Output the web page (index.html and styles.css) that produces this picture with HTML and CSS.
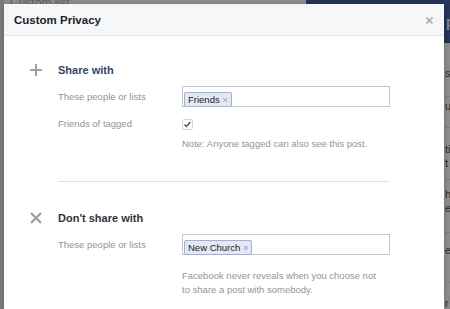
FILE: index.html
```html
<!doctype html>
<html>
<head>
<meta charset="utf-8">
<link rel="stylesheet" href="styles.css">
<title>Custom Privacy</title>
</head>
<body>

    <div class="page">
        <div class="topbar">
            <span class="crumb">Custom list</span>
            <div class="bluebar"><span>p</span></div>
        </div>
        <div class="feed">
            <div class="feed-row r1">s</div>
            <div class="feed-row r2">u</div>
            <div class="feed-row r3">ti<br>t</div>
            <div class="feed-row r4">h<br>e</div>
            <div class="feed-row r5">e</div>
            <div class="feed-row r6">r</div>
        </div>
    </div>

    <div class="dialog">
        <header class="dialog-head">
            <h1>Custom Privacy</h1>
            <svg class="close" width="7" height="7" viewBox="0 0 7 7"><path d="M0.5 0.5L6.5 6.5M6.5 0.5L0.5 6.5" stroke="#a8abaf" stroke-width="1.6"/></svg>
        </header>

        <div class="dialog-body">

            <div class="section">
                <div class="section-head">
                    <span class="icon"><svg width="12" height="12" viewBox="0 0 12 12"><path d="M6 0V12M0 6H12" stroke="#9ba1ab" stroke-width="2"/></svg></span>
                    <h2 class="share">Share with</h2>
                </div>
                <div class="row first">
                    <label>These people or lists</label>
                    <div class="tokens">
                        <span class="token">Friends <b>&times;</b></span>
                    </div>
                </div>
                <div class="row check-row">
                    <label>Friends of tagged</label>
                    <span class="check"><svg width="11" height="11" viewBox="0 0 11 11"><rect x="0.5" y="0.5" width="10" height="10" rx="2" fill="#fff" stroke="#ccd0d5"/><path d="M2.6 5.6L4.4 7.4L8.4 3" fill="none" stroke="#4b4f56" stroke-width="1.4"/></svg></span>
                </div>
                <p class="hint note">Note: Anyone tagged can also see this post.</p>
            </div>

            <div class="divider"></div>

            <div class="section second">
                <div class="section-head">
                    <span class="icon"><svg width="12" height="12" viewBox="0 0 12 12"><path d="M1 1L11 11M11 1L1 11" stroke="#9ba1ab" stroke-width="2.4"/></svg></span>
                    <h2>Don't share with</h2>
                </div>
                <div class="row first">
                    <label>These people or lists</label>
                    <div class="tokens">
                        <span class="token">New Church <b>&times;</b></span>
                    </div>
                </div>
                <p class="hint never">Facebook never reveals when you choose not<br>to share a post with somebody.</p>
            </div>

        </div>
    </div>

</body>
</html>
```

FILE: styles.css
```css
html, body
{
    margin:0;
    height:100%;
}
body
{
    position:relative;
    overflow:hidden;
    background:linear-gradient(to right, #7b7b7b 0, #7b7b7b 4px, #8c8c8c 4px);
    font-family:"Liberation Sans", Arial, sans-serif;
    color:#1d2129;
}

/* dimmed page behind the dialog */
.page
{
    height:309px;
    overflow:hidden;
}
.topbar
{
    display:flex;
    justify-content:space-between;
    height:43px;
}
.crumb
{
    padding-left:10px;
    margin-top:-4px;
    font-size:12px;
    line-height:14px;
    color:#5f5f5f;
}
.bluebar
{
    box-sizing:border-box;
    width:144px;
    background:#26335a;
    border-bottom:1px solid #1e2a4a;
}
.bluebar span
{
    display:block;
    padding:14px 0 0 140px;
    font-size:14px;
    line-height:16px;
    font-weight:bold;
    color:#7d879c;
}
.feed
{
    padding-left:445px;
    font-size:11px;
    line-height:14px;
    color:#2a2a2a;
}
.feed-row
{
    box-sizing:border-box;
    overflow:hidden;
    border-bottom:1px solid #7d7d7d;
}
.r1 { height:54px; padding-top:23px; }
.r2 { height:31px; padding-top:2px; }
.r3 { height:52px; padding-top:14px; }
.r4 { height:53px; padding-top:7px; }
.r5 { height:50px; padding-top:10px; }
.r6 { height:26px; padding-top:13px; border-bottom:none; }

/* dialog */
.dialog
{
    position:absolute;
    left:4px;
    top:4px;
    width:440px;
    bottom:0;
    background:#fff;
    box-shadow:0 1px 4px rgba(0,0,0,.25);
}
.dialog-head
{
    display:flex;
    align-items:center;
    justify-content:space-between;
    height:31px;
    padding:0 11px 0 10px;
    background:#f6f7f9;
    border-bottom:1px solid #e2e4e7;
}
.dialog-head h1
{
    margin:0;
    font-size:11.5px;
    font-weight:bold;
    color:#1d2129;
}
.close
{
    display:block;
    margin-top:2px;
}
.dialog-body
{
    padding:27px 0 0 26px;
}

.section-head
{
    display:flex;
    align-items:center;
    height:14px;
}
.icon
{
    width:28px;
    display:flex;
    align-items:center;
}
.icon svg
{
    display:block;
}
h2
{
    margin:0;
    font-size:11px;
    line-height:14px;
    font-weight:bold;
    color:#333;
}
h2.share
{
    color:#354466;
}

.row
{
    display:grid;
    grid-template-columns:124px 208px;
    align-items:center;
    margin-left:28px;
}
.row.first
{
    margin-top:9px;
}
.row.check-row
{
    margin-top:10px;
    height:14px;
}
label
{
    font-size:9.5px;
    line-height:14px;
    color:#90949c;
}
.tokens
{
    box-sizing:border-box;
    height:21px;
    padding:2px 1px;
    border:1px solid #bdc7d8;
    background:#fff;
}
.token
{
    display:inline-block;
    box-sizing:border-box;
    height:15px;
    padding:0 3px 0 3px;
    border:1px solid #9eb0d4;
    border-radius:2px;
    background:#e4e8f3;
    font-size:9.5px;
    line-height:13px;
    color:#1d2129;
}
.token b
{
    font-weight:normal;
    color:#8d9bc2;
}
.check
{
    display:block;
    height:11px;
}
.check svg
{
    display:block;
}

.hint
{
    margin:0 0 0 152px;
    font-size:9.5px;
    color:#90949c;
}
.note
{
    margin-top:6px;
    line-height:14px;
}
.never
{
    margin-top:14px;
    line-height:13.5px;
}

.divider
{
    width:331px;
    margin:30px 0 0 28px;
    border-top:1px solid #dddfe2;
}
.section.second
{
    margin-top:29px;
}
```
